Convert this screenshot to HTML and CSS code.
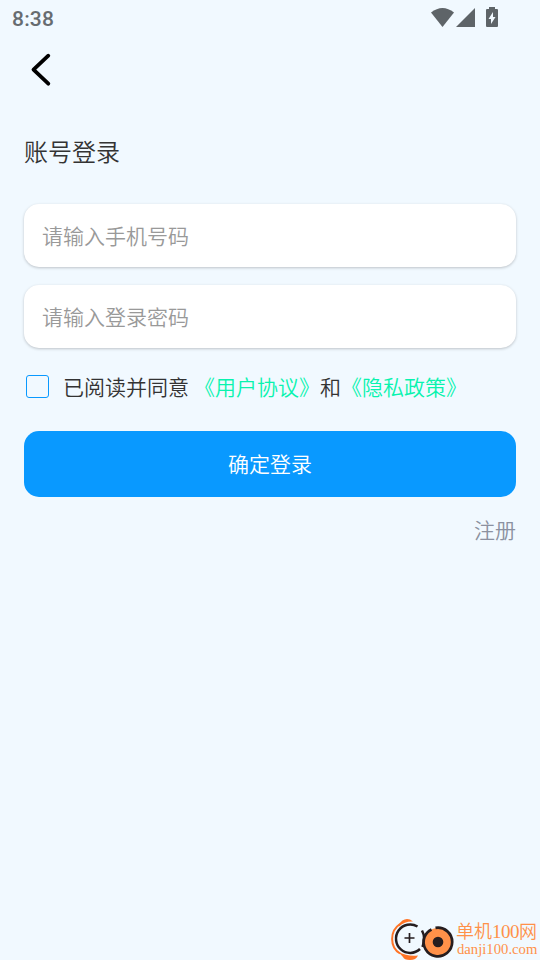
FILE: index.html
```html
<!DOCTYPE html>
<html lang="zh-CN">
<head>
<meta charset="utf-8">
<title>账号登录</title>
<link rel="stylesheet" href="styles.css">
</head>
<body>
<div class="screen">
  <header class="status">
    <span class="clock">8:38</span>
    <svg class="status-icons" width="68" height="24" viewBox="431 6 68 24" fill="#5e6468">
      <path d="M442.500 27 L431 12.500 Q442.500 3.500 454 12.500Z"/>
      <path d="M456 27 L475 8 V27Z"/>
      <path fill-rule="evenodd" d="M489 9 V7 H495 V9 H497 Q498 9 498 10 V26 Q498 27 497 27 H487 Q486 27 486 26 V10 Q486 9 487 9Z M493 12 L488.500 19 H491 V24 L495.500 17 H493Z"/>
    </svg>
  </header>
  <nav class="nav">
    <svg width="22" height="34" viewBox="30 53 22 34" fill="none" stroke="#000" stroke-width="3.800" stroke-linecap="round" stroke-linejoin="round"><path d="M48.300 55.700 L33.500 69.700 L48.300 83.700"/></svg>
  </nav>
  <main class="content">
    <h1 class="title">账号登录</h1>
    <div class="field">请输入手机号码</div>
    <div class="field">请输入登录密码</div>
    <div class="agreement">
      <span class="checkbox"></span>
      <span class="agree-text">已阅读并同意</span>
      <span class="policies"><a class="link">《用户协议》</a>和<a class="link">《隐私政策》</a></span>
    </div>
    <div class="submit">确定登录</div>
    <div class="register">注册</div>
  </main>
  <footer class="brand">
    <svg width="66" height="44" viewBox="390 916 66 44" fill="none">
      <path d="M400 924 C389.500 931 389.500 947 400 953.500" stroke="#ff7426" stroke-width="2"/>
      <path d="M398 925.500 Q405 915 413 921.500 Q405 921 399 926.500Z M398 951.500 Q408 957 418 955.500 Q416 960 410 960 Q404 960 403 957Z" fill="#ff7426"/>
      <path d="M417.500 926.500 A14.200 14.200 0 1 0 420 949" stroke="#251d1f" stroke-width="2.500"/>
      <path d="M422 930.500 Q426 938 422.500 947" stroke="#251d1f" stroke-width="2.500"/>
      <circle cx="438" cy="942" r="14" fill="#ff9149"/>
      <path d="M435.500 927.900 A14.300 14.300 0 1 1 424.500 937 Q426.500 932 431.500 929.500" stroke="#251d1f" stroke-width="2.700"/>
      <circle cx="438" cy="942" r="5.300" fill="#251d1f"/>
      <path d="M404.500 938 H414.500 M409.500 933 V943" stroke="#251d1f" stroke-width="1.700"/>
    </svg>
    <div class="brand-text">
      <div class="brand-name">单机<span class="brand-digits">100</span>网</div>
      <div class="brand-url">danji100.com</div>
    </div>
  </footer>
</div>
</body>
</html>
```
FILE: styles.css
```css
* { box-sizing: border-box; }
body { margin: 0; background: #f1f9ff; font-family: "Noto Sans CJK SC", sans-serif; font-weight: 350; color: #333; }
.screen { height: 960px; display: flex; flex-direction: column; overflow: hidden; }
.status { height: 37px; padding: 6px 41px 0 12px; display: flex; justify-content: space-between; align-items: flex-start; }
.clock { font: 500 21px/26px Roboto, sans-serif; letter-spacing: 0.2px; color: #676c70; }
.status-icons { display: block; }
.nav { height: 66px; padding: 16px 30px 0; }
.nav svg { display: block; }
.content { flex: 1; padding: 30px 24px 0; display: flex; flex-direction: column; font-size: 21px; }
.title { margin: 0 0 36px; font-size: 24px; line-height: 35px; font-weight: 350; }
.field { height: 63px; margin-bottom: 18px; padding-left: 18px; line-height: 62px; border-radius: 15px; background: #fff; color: #999; box-shadow: 0 1px 3px rgba(0, 0, 0, .22); }
.agreement { height: 30px; margin-top: 5px; display: flex; align-items: center; line-height: 30px; white-space: nowrap; }
.checkbox { width: 23px; height: 23px; margin: 0 14px 0 2px; border: 1px solid #0999ff; border-radius: 3px; }
.policies { margin-left: 5px; }
.link { color: #08f3ae; }
.submit { height: 66px; margin-top: 30px; border-radius: 15px; background: #0999ff; color: #fff; text-align: center; line-height: 64px; }
.register { margin-top: 17px; line-height: 31px; text-align: right; color: #8b91a0; }
.brand { height: 44px; display: flex; justify-content: flex-end; color: #ff9149; white-space: nowrap; }
.brand-text { width: 84px; font-family: "Liberation Serif", "Noto Sans CJK SC", serif; }
.brand-name { height: 24px; font-size: 18px; line-height: 31px; }
.brand-digits { font-size: 19px; letter-spacing: -0.5px; }
.brand-url { padding-left: 1px; font-size: 14.7px; line-height: 18px; }
```
